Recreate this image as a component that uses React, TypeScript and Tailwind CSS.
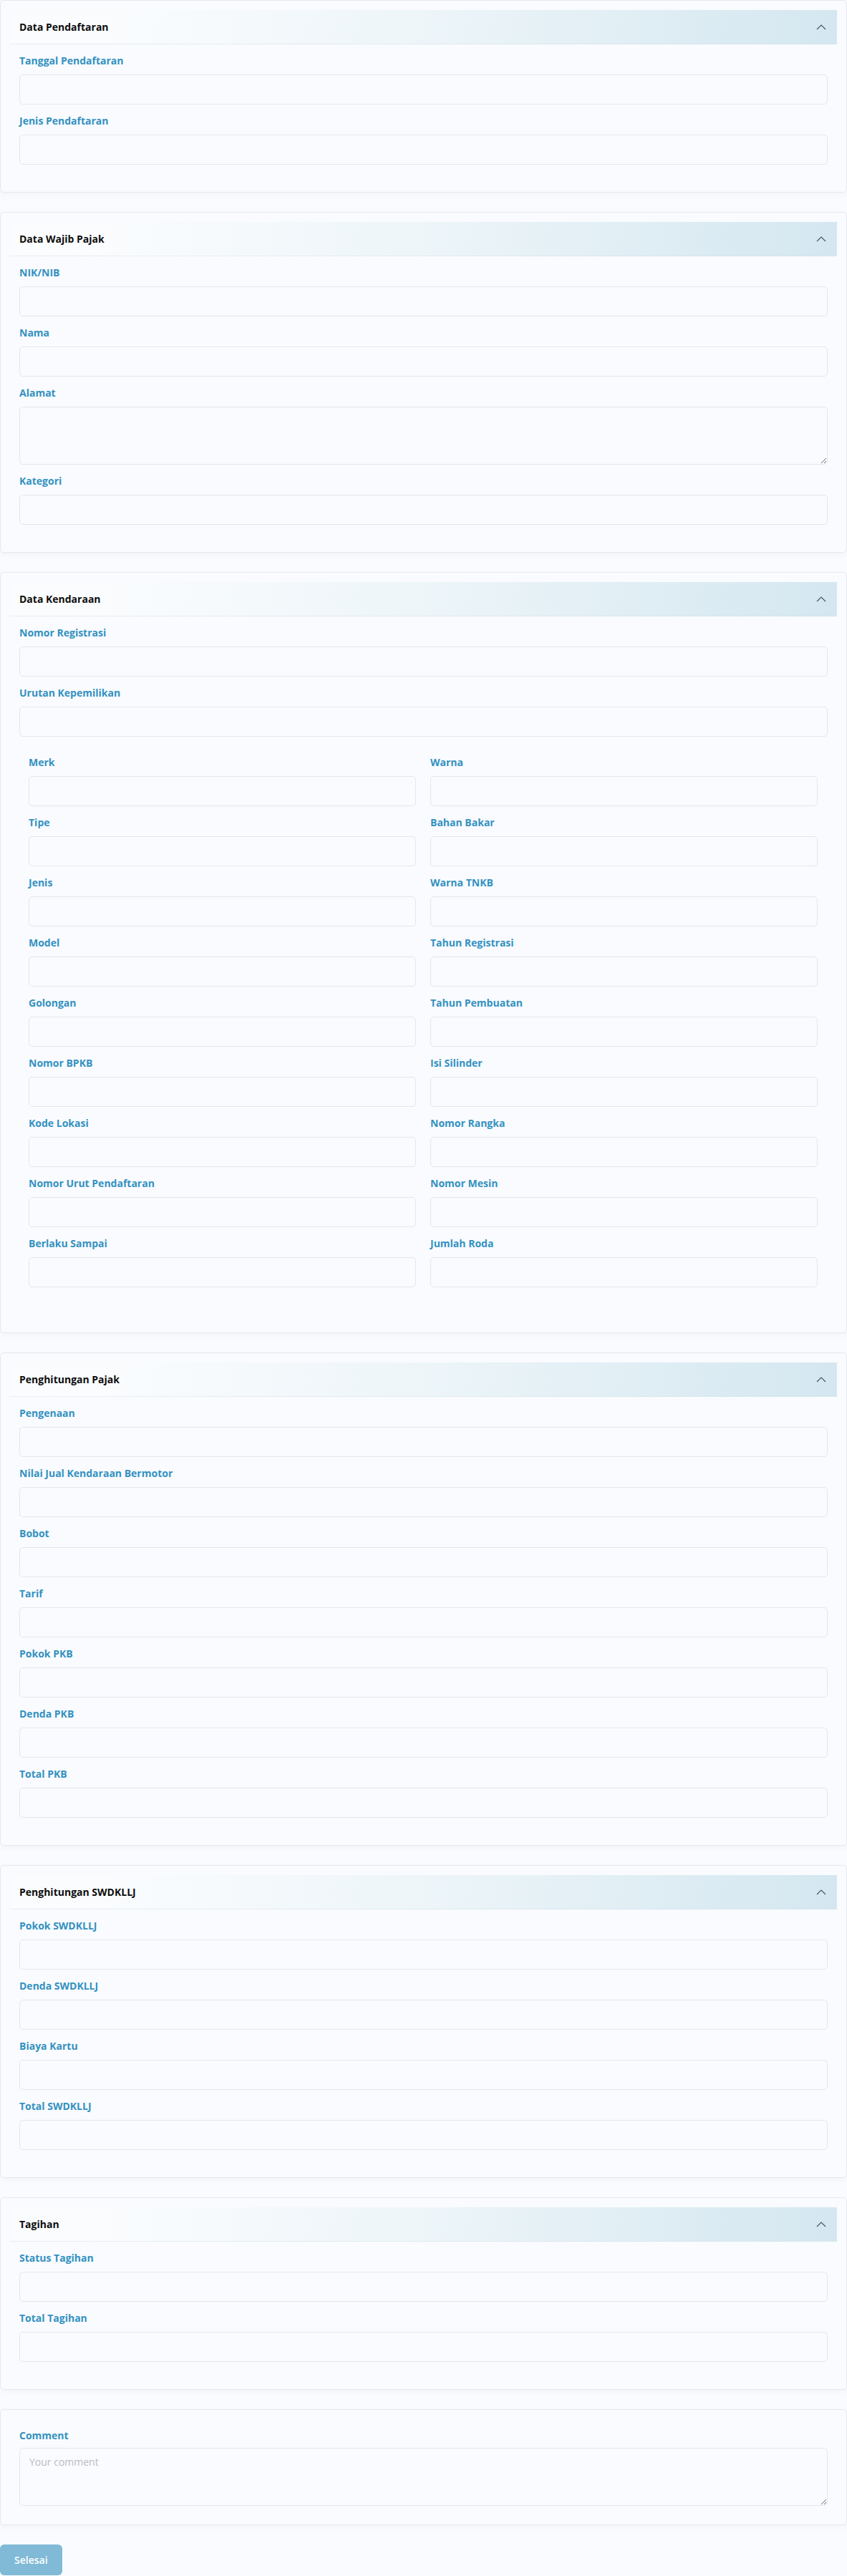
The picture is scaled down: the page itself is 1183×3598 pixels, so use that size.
import React from "react"

type Section = {
  title: string
  fields: Field[]
  grid?: [string, string][]
}

type Field = { label: string; textarea?: boolean }

const sections: Section[] = [
  {
    title: "Data Pendaftaran",
    fields: [{ label: "Tanggal Pendaftaran" }, { label: "Jenis Pendaftaran" }],
  },
  {
    title: "Data Wajib Pajak",
    fields: [
      { label: "NIK/NIB" },
      { label: "Nama" },
      { label: "Alamat", textarea: true },
      { label: "Kategori" },
    ],
  },
  {
    title: "Data Kendaraan",
    fields: [{ label: "Nomor Registrasi" }, { label: "Urutan Kepemilikan" }],
    grid: [
      ["Merk", "Warna"],
      ["Tipe", "Bahan Bakar"],
      ["Jenis", "Warna TNKB"],
      ["Model", "Tahun Registrasi"],
      ["Golongan", "Tahun Pembuatan"],
      ["Nomor BPKB", "Isi Silinder"],
      ["Kode Lokasi", "Nomor Rangka"],
      ["Nomor Urut Pendaftaran", "Nomor Mesin"],
      ["Berlaku Sampai", "Jumlah Roda"],
    ],
  },
  {
    title: "Penghitungan Pajak",
    fields: [
      { label: "Pengenaan" },
      { label: "Nilai Jual Kendaraan Bermotor" },
      { label: "Bobot" },
      { label: "Tarif" },
      { label: "Pokok PKB" },
      { label: "Denda PKB" },
      { label: "Total PKB" },
    ],
  },
  {
    title: "Penghitungan SWDKLLJ",
    fields: [
      { label: "Pokok SWDKLLJ" },
      { label: "Denda SWDKLLJ" },
      { label: "Biaya Kartu" },
      { label: "Total SWDKLLJ" },
    ],
  },
  {
    title: "Tagihan",
    fields: [{ label: "Status Tagihan" }, { label: "Total Tagihan" }],
  },
]

function FormField({ label, textarea }: Field) {
  return (
    <div className="mb-[13px]">
      <label className="mb-[9px] block text-[14px] leading-5 font-bold text-[#3391c1]">
        {label}
      </label>
      {textarea ? (
        <textarea className="block h-[81px] w-full rounded-[5px] border border-[#e3e7ec] bg-[#f9fbfe] outline-none" />
      ) : (
        <input className="block h-[42px] w-full rounded-[5px] border border-[#e3e7ec] bg-[#f9fbfe] outline-none" />
      )}
    </div>
  )
}

function ChevronUp() {
  return (
    <svg width="14" height="9" viewBox="0 0 14 9" fill="none" aria-hidden="true">
      <polyline points="1,8 7,2 13,8" stroke="#4b5563" strokeWidth="1.2" />
    </svg>
  )
}

function Card({ section }: { section: Section }) {
  return (
    <div className="rounded-[5px] border border-[#e5e8ee] bg-[#f9fbfe] px-[13px] pt-[13px] pb-[12px] shadow-[0_3px_8px_rgba(0,0,0,0.03)]">
      {/* Header */}
      <div className="flex h-[48px] items-center justify-between border-b border-dotted border-[#d3e0e7] bg-[linear-gradient(98deg,#fafcfe_12%,#edf5f9_50%,#d4e7f0_100%)] pr-[15px] pl-[13px]">
        <h3 className="text-[14px] leading-5 font-bold text-[#0d0d0d]">{section.title}</h3>
        <ChevronUp />
      </div>
      {/* Body */}
      <div className="px-[13px] pt-[13px] pb-[13px]">
        {section.fields.map((f) => (
          <FormField key={f.label} {...f} />
        ))}
        {section.grid && (
          <div className="mt-[26px] mb-[25px] ml-[13px] mr-[14px] grid grid-cols-2 gap-x-5">
            {section.grid.map(([a, b]) => (
              <React.Fragment key={a}>
                <FormField label={a} />
                <FormField label={b} />
              </React.Fragment>
            ))}
          </div>
        )}
      </div>
    </div>
  )
}

export default function App() {
  return (
    <div className="min-h-screen bg-[#f9fbfe] font-['Open_Sans',sans-serif]">
      <div className="flex flex-col gap-[27px]">
        {sections.map((s) => (
          <Card key={s.title} section={s} />
        ))}

        {/* Comment */}
        <div className="rounded-[5px] border border-[#e5e8ee] bg-[#f9fbfe] px-[13px] pt-[13px] pb-[12px] shadow-[0_3px_8px_rgba(0,0,0,0.03)]">
          <div className="px-[13px] pt-[13px] pb-[14px]">
            <label className="mb-[7px] block text-[14px] leading-5 font-bold text-[#3391c1]">
              Comment
            </label>
            <textarea
              placeholder="Your comment"
              className="block h-[81px] w-full rounded-[5px] border border-[#e3e7ec] bg-[#f9fbfe] px-[13px] py-[9px] text-[14px] leading-5 outline-none placeholder:text-[#b9bcc1]"
            />
          </div>
        </div>

        <div>
          <button className="h-[43px] rounded-[6px] bg-[#80bad6] px-5 text-[14px] font-semibold text-white">
            Selesai
          </button>
        </div>
      </div>
    </div>
  )
}
